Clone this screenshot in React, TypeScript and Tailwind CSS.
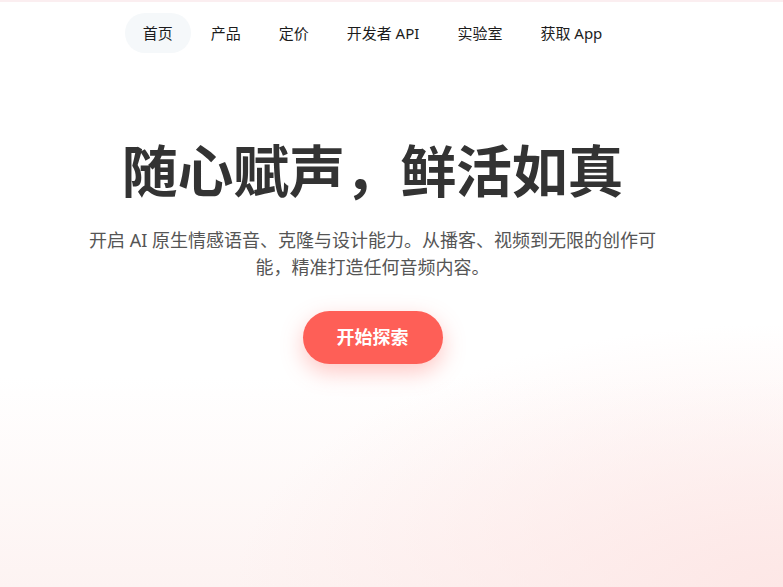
const navItems = ["首页", "产品", "定价", "开发者 API", "实验室", "获取 App"];

export default function App() {
  return (
    <div
      className="h-[587px] w-full overflow-hidden border-t-2 border-[#fbeef0] bg-[radial-gradient(ellipse_70%_45%_at_100%_100%,#fde7e6,transparent),linear-gradient(to_bottom,#ffffff_0%,#ffffff_64%,#fdf3f2_100%)]"
      style={{ fontFamily: '"Noto Sans", "Noto Sans CJK SC", sans-serif' }}
    >
      <div className="flex w-[745px] flex-col items-center">
        <nav className="mt-[11px]">
          <ul className="flex gap-[2px]">
            {navItems.map((item, i) => (
              <li
                key={item}
                className={`flex h-10 items-center rounded-full px-[18px] text-[15px] text-[#1c1c1c] ${
                  i === 0 ? "bg-[#f5f8fa]" : ""
                }`}
              >
                {item}
              </li>
            ))}
          </ul>
        </nav>

        <h1 className="mt-[84px] text-[56px] font-bold leading-[67px] tracking-[-0.3px] text-[#333]">
          随心赋声，鲜活如真
        </h1>

        <p className="mt-[23px] max-w-[580px] text-center text-[18px] leading-[27px] text-[#555]">
          开启 AI 原生情感语音、克隆与设计能力。从播客、视频到无限的创作可能，精准打造任何音频内容。
        </p>

        <button className="mt-[30px] rounded-full bg-[#fe5f57] px-[34px] py-[13px] text-[18px] font-bold leading-[27px] text-white shadow-[0_8px_22px_rgba(254,95,87,0.35)]">
          开始探索
        </button>
      </div>
    </div>
  );
}
